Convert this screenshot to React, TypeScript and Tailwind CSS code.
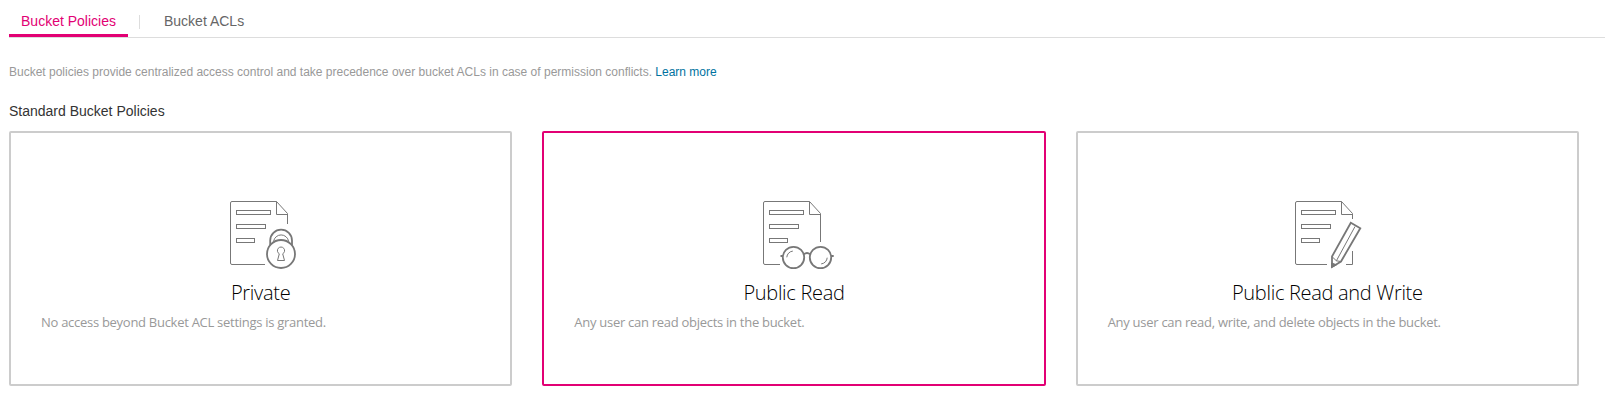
import type { ReactNode } from "react";

function Sheet({ edge, children, base }: { edge: string; base: string; children?: ReactNode }) {
  return (
    <>
      <path d={`M67.5 ${edge}V23.5L56.5 11.5H12Q10.5 11.5 10.5 13V73Q10.5 74.5 12 74.5${base}`} />
      <path d="M56.5 11.5V24.5H67.5" />
      <rect x="16.5" y="20.5" width="34" height="4" />
      <rect x="16.5" y="34.5" width="29" height="4" />
      <rect x="16.5" y="48.5" width="18" height="4" />
      {children}
    </>
  );
}

const svgClass = "h-[90px] w-[82px] fill-none stroke-[#777]";

function PrivateIcon() {
  return (
    <svg viewBox="0 0 82 90" className={svgClass} strokeWidth="1">
      <Sheet edge="34" base="H45">
        <path d="M50.2 55V50.5a10.9 10.9 0 0 1 21.8 0V55" strokeWidth="1.8" />
        <path d="M53.6 51.3a7.6 7.6 0 0 1 15 0" />
        <circle cx="61" cy="64" r="14" strokeWidth="1.8" />
        <path d="M59.3 63.8a3.6 3.6 0 1 1 3.4 0L64.5 70.5H57.5Z" />
      </Sheet>
    </svg>
  );
}

function ReadIcon() {
  return (
    <svg viewBox="0 0 82 90" className={svgClass} strokeWidth="1">
      <Sheet edge="52" base="H27" />
      <g strokeWidth="1.8">
        <circle cx="40.5" cy="67.5" r="10.7" />
        <circle cx="67.5" cy="67.5" r="10.7" />
        <path d="M50.8 64.3Q54 61.6 57.2 64.3M27.5 66H30M78 66H80.7" />
      </g>
      <path d="M33.8 67.3a6.6 6.6 0 0 1 6-6.2M74.2 67.7a6.6 6.6 0 0 1-6 6.2" />
    </svg>
  );
}

function WriteIcon() {
  return (
    <svg viewBox="1 0 82 90" className={svgClass} strokeWidth="1">
      <Sheet edge="29" base="H42" />
      <path d="M67.5 61V74.5H61" />
      <path d="M47 66.5L65.8 32.8L75.3 38.3L56 71.5L47 77Z" strokeWidth="1.8" />
      <path d="M47.2 66.8L51.4 70.8L70 36.5M51.4 70.8L56 71.5" />
      <path d="M46.7 73L51.5 74.8L46.5 77.5Z" className="fill-[#777]" />
    </svg>
  );
}

const policies = [
  { title: "Private", text: "No access beyond Bucket ACL settings is granted.", icon: <PrivateIcon />, border: "border-[#ccc]" },
  { title: "Public Read", text: "Any user can read objects in the bucket.", icon: <ReadIcon />, border: "border-[#e20074]" },
  { title: "Public Read and Write", text: "Any user can read, write, and delete objects in the bucket.", icon: <WriteIcon />, border: "border-[#ccc]" },
];

export default function App() {
  return (
    <main className="h-[413px] overflow-hidden bg-white pl-[9px] font-['Liberation_Sans',sans-serif]">
      <nav className="flex h-[38px] items-start border-b border-[#ddd] text-sm text-[#666]">
        <button className="h-[37px] w-[119px] border-b-3 border-[#e20074] pt-[8px] text-[#e20074]">
          Bucket Policies
        </button>
        <span className="mt-[15px] ml-[11px] h-[14px] w-px bg-[#ddd]" />
        <button className="ml-[24px] h-[37px] pt-[5px]">Bucket ACLs</button>
      </nav>
      <p className="mt-[26px] text-xs leading-4 text-[#999]">
        Bucket policies provide centralized access control and take precedence over bucket ACLs in case of permission conflicts.{" "}
        <a href="#" className="text-[#00739f]">Learn more</a>
      </p>
      <h2 className="mt-[21px] text-sm leading-5 text-[#333]">Standard Bucket Policies</h2>
      <section className="mt-[10px] mr-[26px] grid grid-cols-3 gap-[30px] font-['Open_Sans','Noto_Sans',sans-serif]">
        {policies.map((p) => (
          <article key={p.title} className={`flex h-[255px] flex-col items-center rounded-[2px] border-2 pt-[57px] ${p.border}`}>
            {p.icon}
            <h3 className="text-[20px] leading-[26px] font-light tracking-[-0.3px] text-black">{p.title}</h3>
            <p className="mt-[7px] self-stretch px-[30px] text-[13px] leading-[18px] tracking-[-0.28px] text-[#999]">{p.text}</p>
          </article>
        ))}
      </section>
    </main>
  );
}
